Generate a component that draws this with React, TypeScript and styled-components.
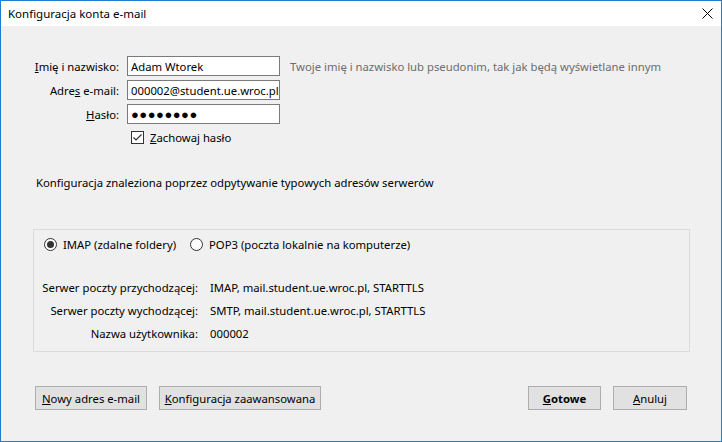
import React from "react";
import styled, { createGlobalStyle } from "styled-components";

const Global = createGlobalStyle`
  html, body { margin: 0; padding: 0; background: #f0f0f0; }
  body { font-family: "Noto Sans", "Open Sans", sans-serif; font-size: 11.3px; color: #000; }
  * { box-sizing: border-box; }
`;

const Win = styled.div`
  width: 722px;
  height: 442px;
  border: 1px solid #1a7fd4;
  display: flex;
  flex-direction: column;
  background: #f0f0f0;
  overflow: hidden;
`;

const TitleBar = styled.div`
  height: 25px;
  background: #fff;
  display: flex;
  align-items: center;
  justify-content: space-between;
  padding: 0 8px 0 7px;
  flex: none;
`;

const Title = styled.span`
  font-size: 11.5px;
  color: #000;
`;

const Content = styled.div`
  flex: 1;
  display: flex;
  flex-direction: column;
  padding: 30px 34px 0 32px;
`;

const FormGrid = styled.div`
  display: grid;
  grid-template-columns: 86px 153px auto;
  column-gap: 8px;
  row-gap: 4px;
  align-items: center;
`;

const Label = styled.label`
  text-align: right;
  white-space: nowrap;
`;

const Input = styled.div<{ $pw?: boolean }>`
  height: 20px;
  border: 1px solid #7a7a7a;
  background: #fff;
  padding: 0 3px;
  display: flex;
  align-items: center;
  white-space: nowrap;
  overflow: hidden;
  font-size: ${(p) => (p.$pw ? "13px" : "11.3px")};
  letter-spacing: ${(p) => (p.$pw ? "0.5px" : "0")};
`;

const Hint = styled.span`
  color: #6d6d6d;
  padding-left: 2px;
  white-space: nowrap;
`;

const CheckRow = styled.div`
  grid-column: 2 / 4;
  display: flex;
  align-items: center;
  gap: 6px;
  padding-left: 4px;
  margin-top: 2px;
`;

const Box = styled.span`
  width: 13px;
  height: 13px;
  border: 1px solid #333;
  background: #fff;
  display: flex;
  align-items: center;
  justify-content: center;
`;

const U = styled.span`
  text-decoration: underline;
`;

const Found = styled.div`
  margin-top: 30px;
  padding-left: 3px;
`;

const Group = styled.div`
  margin: 39px -3px 0 0;
  border: 1px solid #dcdcdc;
  height: 123px;
  display: flex;
  flex-direction: column;
  padding: 7px 0 0 10px;
`;

const RadioRow = styled.div`
  display: flex;
  align-items: center;
  gap: 14px;
`;

const RadioItem = styled.label`
  display: flex;
  align-items: center;
  gap: 6px;
`;

const Radio = styled.span<{ $on?: boolean }>`
  width: 13px;
  height: 13px;
  border-radius: 50%;
  border: 1px solid #333;
  background: #fff;
  display: flex;
  align-items: center;
  justify-content: center;
  &::after {
    content: "";
    width: 7px;
    height: 7px;
    border-radius: 50%;
    background: ${(p) => (p.$on ? "#333" : "transparent")};
  }
`;

const InfoGrid = styled.div`
  margin-top: 28px;
  display: grid;
  grid-template-columns: 163px auto;
  column-gap: 12px;
  row-gap: 8px;
  margin-left: -9px;
`;

const InfoLabel = styled.span`
  text-align: right;
  white-space: nowrap;
`;

const InfoValue = styled.span`
  white-space: nowrap;
`;

const Footer = styled.div`
  margin-top: 34px;
  display: flex;
  align-items: center;
  gap: 12px;
  padding-left: 2px;
`;

const Spacer = styled.div`
  flex: 1;
`;

const Button = styled.div<{ $w: number; $bold?: boolean }>`
  width: ${(p) => p.$w}px;
  height: 24px;
  border: 1px solid #adadad;
  background: #e1e1e1;
  display: flex;
  align-items: center;
  justify-content: center;
  white-space: nowrap;
  font-weight: ${(p) => (p.$bold ? 700 : 400)};
`;

export default function App() {
  return (
    <>
      <Global />
      <Win>
        <TitleBar>
          <Title>Konfiguracja konta e-mail</Title>
          <svg width="11" height="11" viewBox="0 0 11 11">
            <path d="M0.5 0.5 L10.5 10.5 M10.5 0.5 L0.5 10.5" stroke="#000" strokeWidth="1" fill="none" />
          </svg>
        </TitleBar>
        <Content>
          <FormGrid>
            <Label><U>I</U>mię i nazwisko:</Label>
            <Input>Adam Wtorek</Input>
            <Hint>Twoje imię i nazwisko lub pseudonim, tak jak będą wyświetlane innym</Hint>
            <Label>Adre<U>s</U> e-mail:</Label>
            <Input>000002@student.ue.wroc.pl</Input>
            <span />
            <Label><U>H</U>asło:</Label>
            <Input $pw>●●●●●●●●</Input>
            <span />
            <span />
            <CheckRow>
              <Box>
                <svg width="11" height="11" viewBox="0 0 11 11">
                  <path d="M1.5 5.5 L4 8 L9.5 2.5" stroke="#333" strokeWidth="1.2" fill="none" />
                </svg>
              </Box>
              <span><U>Z</U>achowaj hasło</span>
            </CheckRow>
          </FormGrid>
          <Found>Konfiguracja znaleziona poprzez odpytywanie typowych adresów serwerów</Found>
          <Group>
            <RadioRow>
              <RadioItem><Radio $on />IMAP (zdalne foldery)</RadioItem>
              <RadioItem><Radio />POP3 (poczta lokalnie na komputerze)</RadioItem>
            </RadioRow>
            <InfoGrid>
              <InfoLabel>Serwer poczty przychodzącej:</InfoLabel>
              <InfoValue>IMAP, mail.student.ue.wroc.pl, STARTTLS</InfoValue>
              <InfoLabel>Serwer poczty wychodzącej:</InfoLabel>
              <InfoValue>SMTP, mail.student.ue.wroc.pl, STARTTLS</InfoValue>
              <InfoLabel>Nazwa użytkownika:</InfoLabel>
              <InfoValue>000002</InfoValue>
            </InfoGrid>
          </Group>
          <Footer>
            <Button $w={112}><U>N</U>owy adres e-mail</Button>
            <Button $w={162}><U>K</U>onfiguracja zaawansowana</Button>
            <Spacer />
            <Button $w={73} $bold><U>G</U>otowe</Button>
            <Button $w={74}><U>A</U>nuluj</Button>
          </Footer>
        </Content>
      </Win>
    </>
  );
}
